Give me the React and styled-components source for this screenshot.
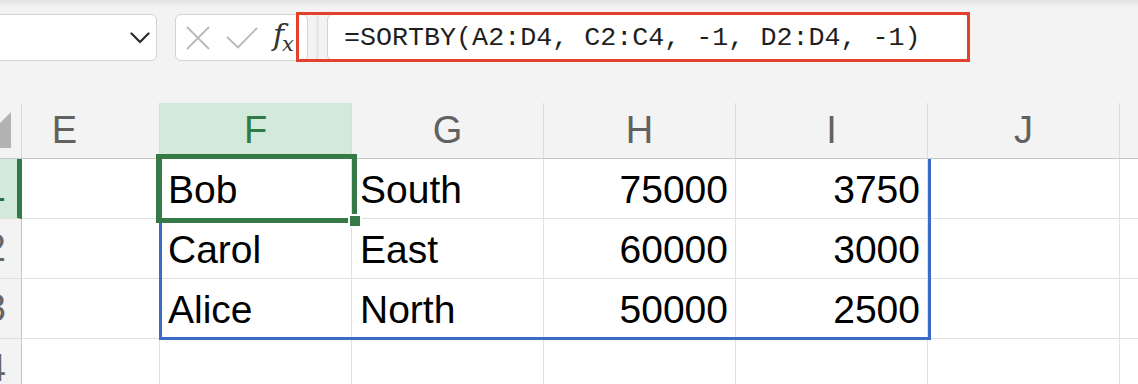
import React from "react";
import styled, { createGlobalStyle } from "styled-components";

const GlobalStyle = createGlobalStyle`
  html, body {
    margin: 0;
    padding: 0;
    background: #ffffff;
    overflow: hidden;
  }
  body {
    font-family: "Liberation Sans", Arial, sans-serif;
  }
`;

const Page = styled.div`
  width: 1138px;
  height: 384px;
  overflow: hidden;
  background: #ffffff;
`;

const Toolbar = styled.div`
  position: relative;
  height: 103px;
  box-sizing: border-box;
  padding-top: 14px;
  display: flex;
  align-items: flex-start;
  background: linear-gradient(#e2e2e2 0px, #f3f3f3 7px, #f3f3f3 100%);
`;

const Box = styled.div`
  height: 47px;
  box-sizing: border-box;
  background: #ffffff;
  border: 1px solid #d3d3d3;
  border-radius: 6px;
  display: flex;
  align-items: center;
`;

const NameBox = styled(Box)`
  width: 167px;
  margin-left: -10px;
  justify-content: flex-end;
  padding-right: 6px;
`;

const FxBox = styled(Box)`
  width: 133px;
  margin-left: 18px;
  padding-left: 10px;
  gap: 16px;
`;

const FxLabel = styled.span`
  font-family: "DejaVu Serif", "Liberation Serif", serif;
  font-style: italic;
  font-size: 30px;
  color: #333333;
  margin-left: -1px;
  line-height: 1;
  letter-spacing: -2px;
  & sub {
    font-size: 21px;
    vertical-align: -6px;
  }
`;

const Splitter = styled.div`
  width: 3px;
  height: 47px;
  margin: 0 8px;
  background: #e8e8e8;
`;

const FormulaInput = styled(Box)`
  width: 642px;
  padding-left: 16px;
  font-family: "Liberation Mono", "Courier New", monospace;
  font-size: 26.7px;
  color: #1f1f1f;
  white-space: pre;
`;

const Highlight = styled.div`
  position: absolute;
  left: 296px;
  top: 12px;
  width: 674px;
  height: 50px;
  box-sizing: border-box;
  border: 3px solid #e3412b;
  pointer-events: none;
`;

const Sheet = styled.div`
  position: relative;
  display: grid;
  grid-template-columns: 22px 138px repeat(6, 192px);
  grid-template-rows: 56px repeat(4, 60px);
  width: 1312px;
`;

const Corner = styled.div`
  box-sizing: border-box;
  background: #f3f3f3;
  border-right: 1px solid #d9d9d9;
  border-bottom: 1px solid #c6c6c6;
  padding-top: 9px;
  & svg {
    display: block;
  }
`;

const ColHeader = styled.div`
  box-sizing: border-box;
  background: ${(p) => (p.$active ? "#d3e9d9" : "#f3f3f3")};
  border-right: 1px solid #dcdcdc;
  border-bottom: 1px solid #c6c6c6;
  display: flex;
  align-items: center;
  justify-content: ${(p) => (p.$clipped ? "flex-end" : "center")};
  padding-right: ${(p) => (p.$clipped ? "82px" : "0")};
  font-size: 38px;
  color: ${(p) => (p.$active ? "#2f7a47" : "#616161")};
`;

const RowHeader = styled.div`
  box-sizing: border-box;
  background: ${(p) => (p.$active ? "#d3e9d9" : "#f3f3f3")};
  border-right: ${(p) => (p.$active ? "5px solid #357a46" : "1px solid #c6c6c6")};
  border-bottom: 1px solid #dedede;
  display: flex;
  align-items: center;
  justify-content: flex-end;
  padding-right: ${(p) => (p.$active ? "11px" : "15px")};
  overflow: hidden;
  font-size: 38px;
  color: ${(p) => (p.$active ? "#2f6e42" : "#666666")};
`;

const Cell = styled.div`
  box-sizing: border-box;
  border-right: 1px solid #e1e1e1;
  border-bottom: 1px solid #e1e1e1;
  display: flex;
  align-items: center;
  justify-content: ${(p) => (p.$num ? "flex-end" : "flex-start")};
  padding: ${(p) => (p.$num ? "2px 7px 0 0" : "2px 0 0 8px")};
  font-size: 39px;
  color: #000000;
  white-space: nowrap;
  overflow: hidden;
`;

const RangeBox = styled.div`
  position: absolute;
  left: 159px;
  top: 56px;
  width: 772px;
  height: 181px;
  box-sizing: border-box;
  border: 3px solid #3a6bc5;
  border-top: none;
  pointer-events: none;
`;

const Selection = styled.div`
  position: absolute;
  left: 156px;
  top: 51px;
  width: 201px;
  height: 69px;
  box-sizing: border-box;
  border: 5px solid #357a46;
  pointer-events: none;
`;

const FillHandle = styled.div`
  position: absolute;
  left: 187px;
  top: 55px;
  width: 10px;
  height: 10px;
  background: #357a46;
  border: 2px solid #ffffff;
`;

const columns = ["E", "F", "G", "H", "I", "J", "K"];

const rows = [
  { n: 1, data: ["Bob", "South", "75000", "3750"] },
  { n: 2, data: ["Carol", "East", "60000", "3000"] },
  { n: 3, data: ["Alice", "North", "50000", "2500"] },
  { n: 4, data: ["", "", "", ""] },
];

function Chevron() {
  return (
    <svg width="20" height="12" viewBox="0 0 20 12">
      <polyline
        points="1.5,1.5 10,10 18.5,1.5"
        fill="none"
        stroke="#2b2b2b"
        strokeWidth="2.2"
        strokeLinecap="round"
        strokeLinejoin="round"
      />
    </svg>
  );
}

function CancelIcon() {
  return (
    <svg width="24" height="24" viewBox="0 0 24 24">
      <path d="M1 1 L23 23 M23 1 L1 23" stroke="#b9b9b9" strokeWidth="1.8" fill="none" />
    </svg>
  );
}

function EnterIcon() {
  return (
    <svg width="32" height="22" viewBox="0 0 32 22">
      <polyline points="1,10 12,20.5 31,1" fill="none" stroke="#b9b9b9" strokeWidth="1.8" />
    </svg>
  );
}

function SelectAll() {
  return (
    <svg width="11" height="36" viewBox="0 0 11 36">
      <polygon points="11,0 11,36 0,36 0,11" fill="#b3b3b3" />
    </svg>
  );
}

export default function App() {
  return (
    <Page>
      <GlobalStyle />
      <Toolbar>
        <NameBox>
          <Chevron />
        </NameBox>
        <FxBox>
          <CancelIcon />
          <EnterIcon />
          <FxLabel>
            f<sub>x</sub>
          </FxLabel>
        </FxBox>
        <Splitter />
        <FormulaInput>=SORTBY(A2:D4, C2:C4, -1, D2:D4, -1)</FormulaInput>
        <Highlight />
      </Toolbar>
      <Sheet>
        <Corner>
          <SelectAll />
        </Corner>
        {columns.map((c) => (
          <ColHeader key={c} $active={c === "F"} $clipped={c === "E"}>
            {c}
          </ColHeader>
        ))}
        {rows.map((r) => (
          <React.Fragment key={r.n}>
            <RowHeader $active={r.n === 1}>{r.n}</RowHeader>
            <Cell />
            <Cell>{r.data[0]}</Cell>
            <Cell>{r.data[1]}</Cell>
            <Cell $num>{r.data[2]}</Cell>
            <Cell $num>{r.data[3]}</Cell>
            <Cell />
            <Cell />
          </React.Fragment>
        ))}
        <RangeBox />
        <Selection>
          <FillHandle />
        </Selection>
      </Sheet>
    </Page>
  );
}
